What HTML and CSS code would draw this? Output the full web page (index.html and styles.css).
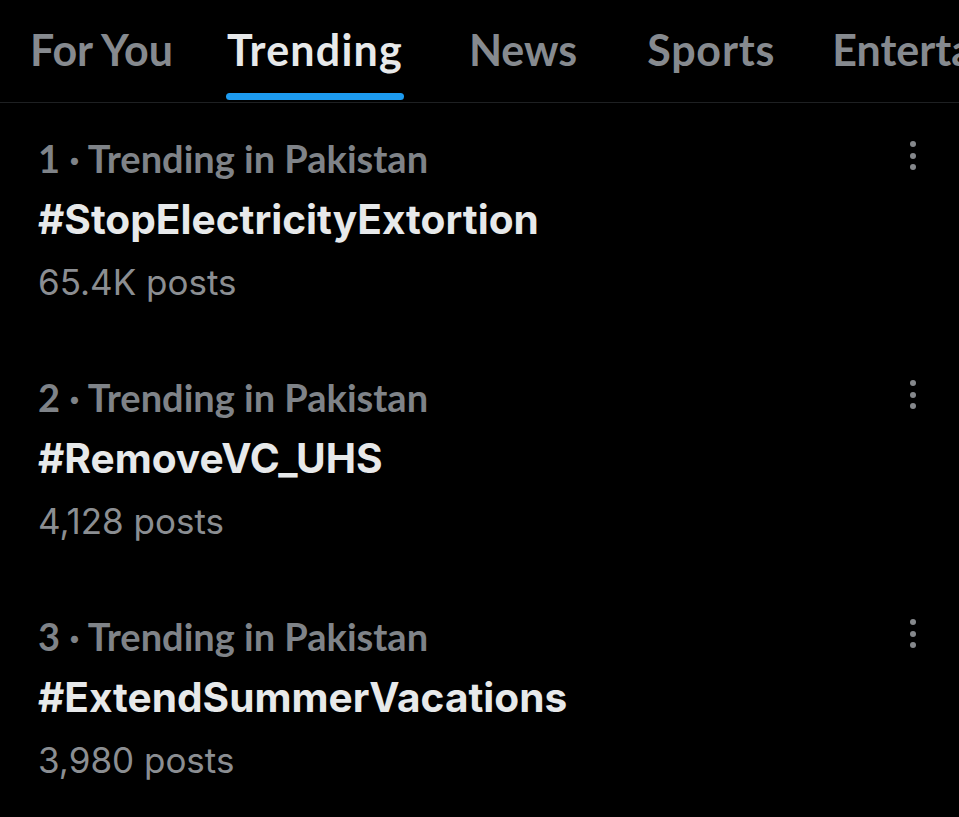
FILE: index.html
```html
<!DOCTYPE html>
<html>
<head>
<meta charset="utf-8">
<link rel="stylesheet" href="styles.css">
</head>
<body>
<div class="page">
  <nav class="tabs">
    <div class="tab tab-foryou">For You</div>
    <div class="tab active">Trending<span class="bar"></span></div>
    <div class="tab tab-news">News</div>
    <div class="tab tab-sports">Sports</div>
    <div class="tab tab-ent">Entertainment</div>
  </nav>
  <section class="list">
    <div class="trend">
      <div class="info">
        <div class="meta">1 · Trending in Pakistan</div>
        <div class="tag">#StopElectricityExtortion</div>
        <div class="count">65.4K posts</div>
      </div>
      <div class="more"><span></span><span></span><span></span></div>
    </div>
    <div class="trend">
      <div class="info">
        <div class="meta">2 · Trending in Pakistan</div>
        <div class="tag">#RemoveVC_UHS</div>
        <div class="count">4,128 posts</div>
      </div>
      <div class="more"><span></span><span></span><span></span></div>
    </div>
    <div class="trend">
      <div class="info">
        <div class="meta">3 · Trending in Pakistan</div>
        <div class="tag">#ExtendSummerVacations</div>
        <div class="count">3,980 posts</div>
      </div>
      <div class="more"><span></span><span></span><span></span></div>
    </div>
  </section>
</div>
</body>
</html>
```
FILE: styles.css
```css
html, body {
  margin: 0;
  padding: 0;
  background: #000;
}
.page {
  width: 959px;
  height: 817px;
  overflow: hidden;
  background: #000;
}
.tabs {
  display: flex;
  flex-wrap: nowrap;
  gap: 62px;
  padding-left: 30px;
  height: 103px;
  border-bottom: 1px solid #1e2022;
  box-sizing: border-box;
  overflow: hidden;
  white-space: nowrap;
}
.tab {
  position: relative;
  font-family: Lato, "Liberation Sans", sans-serif;
  font-weight: 700;
  font-size: 43px;
  color: #868a8f;
  padding-top: 24px;
  flex: none;
}
.tab-foryou {
  margin-right: -8px;
}
.tab-news {
  margin-left: 4px;
}
.tab-sports {
  margin-left: 8px;
  letter-spacing: 0.8px;
}
.tab-ent {
  margin-left: -5px;
}
.tab.active {
  color: #e7e9ea;
  letter-spacing: 1.2px;
}
.tab .bar {
  position: absolute;
  left: -1px;
  right: -1px;
  top: 93px;
  height: 7px;
  border-radius: 4px;
  background: #1d9bf0;
}
.list {
  display: flex;
  flex-direction: column;
}
.trend {
  display: flex;
  justify-content: space-between;
  padding: 24px 38px 0 38px;
  height: 239px;
  box-sizing: border-box;
}
.info {
  display: flex;
  flex-direction: column;
}
.meta {
  font-family: Lato, "Liberation Sans", sans-serif;
  font-weight: 700;
  font-size: 38px;
  line-height: 62px;
  color: #7f8388;
}
.tag {
  font-family: Inter, "Liberation Sans", sans-serif;
  font-weight: 700;
  font-size: 40.6px;
  line-height: 62px;
  color: #e7e9ea;
}
.count {
  font-family: Inter, "Liberation Sans", sans-serif;
  font-weight: 400;
  font-size: 35px;
  line-height: 62px;
  color: #8b8e92;
}
.more {
  display: flex;
  flex-direction: column;
  gap: 5.5px;
  padding-top: 14px;
  margin-right: 5px;
}
.more span {
  width: 6px;
  height: 6px;
  border-radius: 50%;
  background: #85888c;
}
```
